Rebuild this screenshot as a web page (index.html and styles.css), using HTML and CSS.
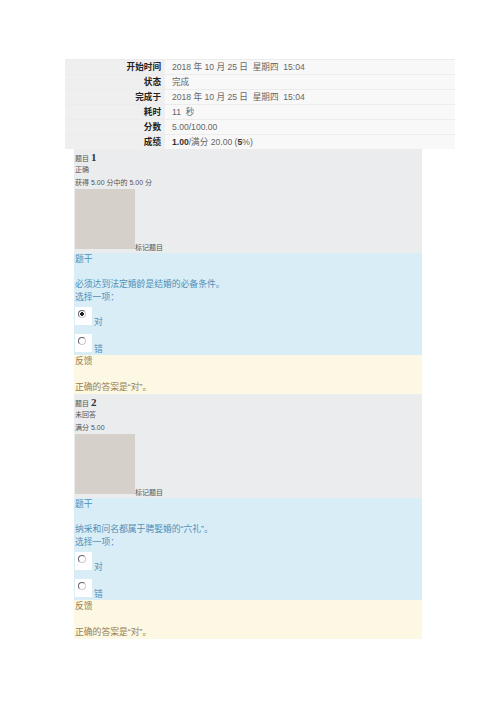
FILE: index.html
```html
<!DOCTYPE html>
<html lang="zh-CN">
<head>
  <meta charset="UTF-8">
  <title>测验回顾</title>
  <link rel="stylesheet" href="styles.css">
</head>
<body>
  <div class="page">
    <table class="summary">
      <tr><th>开始时间</th><td>2018 年 10 月 25 日&nbsp; 星期四&nbsp; 15:04</td></tr>
      <tr><th>状态</th><td>完成</td></tr>
      <tr><th>完成于</th><td>2018 年 10 月 25 日&nbsp; 星期四&nbsp; 15:04</td></tr>
      <tr><th>耗时</th><td>11&nbsp; 秒</td></tr>
      <tr><th>分数</th><td>5.00/100.00</td></tr>
      <tr><th>成绩</th><td><b>1.00</b>/满分 20.00 (<b>5</b>%)</td></tr>
    </table>

    <!-- 题目 1 -->
    <div class="que">
      <div class="info">
        <h3 class="no">题目 <span class="qno">1</span></h3>
        <div class="state">正确</div>
        <div class="grade">获得 5.00 分中的 5.00 分</div>
        <div class="flag"><span class="flag-box"></span>标记题目</div>
      </div>
      <div class="formulation">
        <h4 class="head">题干</h4>
        <p class="qtext">必须达到法定婚龄是结婚的必备条件。</p>
        <div class="prompt">选择一项：</div>
        <div class="option"><span class="radio-box"><span class="radio checked"></span></span><span class="opt-label">对</span></div>
        <div class="option"><span class="radio-box"><span class="radio"></span></span><span class="opt-label">错</span></div>
      </div>
      <div class="feedback">
        <h4 class="head">反馈</h4>
        <p class="answer">正确的答案是“对”。</p>
      </div>
    </div>

    <!-- 题目 2 -->
    <div class="que">
      <div class="info">
        <h3 class="no">题目 <span class="qno">2</span></h3>
        <div class="state">未回答</div>
        <div class="grade">满分 5.00</div>
        <div class="flag"><span class="flag-box"></span>标记题目</div>
      </div>
      <div class="formulation">
        <h4 class="head">题干</h4>
        <p class="qtext">纳采和问名都属于聘娶婚的“六礼”。</p>
        <div class="prompt">选择一项：</div>
        <div class="option"><span class="radio-box"><span class="radio"></span></span><span class="opt-label">对</span></div>
        <div class="option"><span class="radio-box"><span class="radio"></span></span><span class="opt-label">错</span></div>
      </div>
      <div class="feedback">
        <h4 class="head">反馈</h4>
        <p class="answer">正确的答案是“对”。</p>
      </div>
    </div>
  </div>
</body>
</html>
```

FILE: styles.css
```css
body {
  margin: 0;
  background: #fff;
  font-family: "Liberation Sans", "Noto Sans CJK SC", sans-serif;
}
.page {
  padding-top: 59px;
}
.summary {
  margin-left: 65px;
  width: 390px;
  border-collapse: collapse;
  font-size: 8.6px;
}
.summary th,
.summary td {
  height: 14px;
  padding: 0;
  border-top: 1px solid #ececec;
  line-height: 14px;
}
.summary th {
  width: 96px;
  padding-right: 4px;
  text-align: right;
  background-color: #efefef;
  color: #222;
  font-weight: bold;
}
.summary td {
  padding-left: 7px;
  background-color: #f8f8f8;
  color: #666;
}
.summary td b {
  color: #333;
}
.que {
  margin-left: 74px;
  width: 348px;
}
.info {
  background-color: #ebecee;
  padding: 1px 1px 0;
  color: #555;
  font-size: 7px;
}
.no {
  margin: 0;
  height: 13px;
  font-size: 7px;
  font-weight: normal;
  line-height: 14px;
}
.qno {
  font-family: "Liberation Serif", serif;
  font-size: 11px;
  font-weight: bold;
  color: #333;
}
.state,
.grade {
  height: 13px;
  line-height: 13px;
}
.flag {
  display: flex;
  align-items: flex-end;
  height: 64px;
  line-height: 10px;
}
.flag-box {
  width: 60px;
  height: 60px;
  margin-bottom: 4px;
  background-color: #d5d0c9;
}
.formulation {
  background-color: #d9edf7;
  color: #5090b8;
  font-size: 8.8px;
  padding: 0 1px 3px;
}
.head {
  margin: 0;
  height: 13px;
  font-size: 8.8px;
  font-weight: normal;
  line-height: 13px;
}
.qtext {
  margin: 12px 0 0;
  line-height: 13px;
}
.prompt {
  line-height: 12px;
  margin-bottom: 4px;
}
.option {
  display: flex;
  align-items: flex-end;
  height: 18px;
  margin-bottom: 9px;
}
.option:last-child {
  margin-bottom: 0;
}
.radio-box {
  width: 17px;
  height: 18px;
  background-color: #fff;
}
.radio {
  display: block;
  width: 6px;
  height: 6px;
  margin: 3px 0 0 3px;
  border: 1px solid #666;
  border-radius: 50%;
  border-bottom-color: #ccc;
  border-right-color: #ccc;
}
.radio.checked {
  background: radial-gradient(circle, #222 0 1.6px, #fff 2px);
}
.opt-label {
  padding-left: 2px;
  line-height: 10px;
  margin-bottom: -2px;
}
.feedback {
  background-color: #fcf8e3;
  color: #9a7d4b;
  font-size: 8.8px;
  padding: 0 1px;
}
.answer {
  margin: 13px 0 0;
  line-height: 13px;
}
```
